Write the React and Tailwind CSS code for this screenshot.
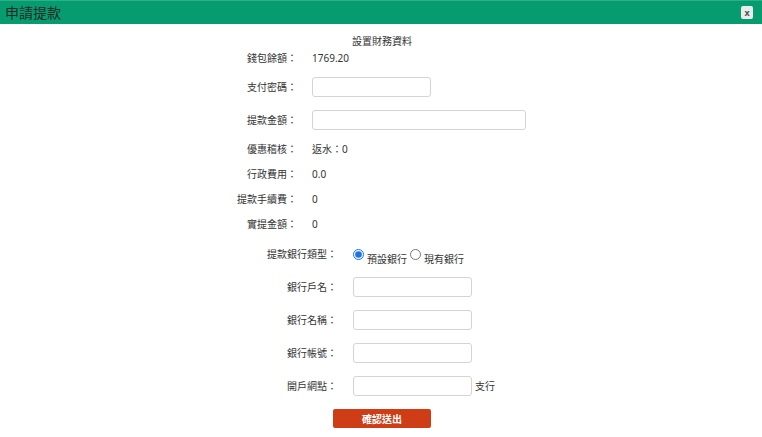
import React from 'react';

const font = "font-['Noto_Sans','Noto_Sans_CJK_TC',sans-serif]";

const InfoRow = ({ label, value, className = '' }) => (
    <div className={`flex items-center h-[16px] pl-[197px] ${className}`}>
        <div className="w-[100px] text-right shrink-0">{label}</div>
        <div className="ml-[15px]">{value}</div>
    </div>
);

const InputRow = ({ label, width = 'w-[119px]', className = '' }) => (
    <div className={`flex items-center h-[20px] pl-[197px] ${className}`}>
        <div className="w-[100px] text-right shrink-0">{label}</div>
        <input type="text" className={`ml-[15px] h-[20px] ${width} border border-[#d4d4d4] rounded-[3px] bg-white outline-none`} />
    </div>
);

const BankRow = ({ label, suffix, className = '' }) => (
    <div className={`flex items-center h-[20px] pl-[197px] ${className}`}>
        <div className="w-[140px] text-right shrink-0">{label}</div>
        <input type="text" className="ml-[16px] h-[20px] w-[119px] border border-[#d4d4d4] rounded-[3px] bg-white outline-none" />
        {suffix && <span className="ml-[3px]">{suffix}</span>}
    </div>
);

export default function App() {
    return (
        <div className={`w-[762px] h-[437px] bg-white text-[10px] text-[#333] ${font}`}>
            {/* header */}
            <div className="h-[24px] bg-[#079b70] border-t border-[#2bb089] flex items-center justify-between pl-[5px] pr-[9px]">
                <span className="text-[14px] text-[#1d2b25] leading-none">申請提款</span>
                <button className="w-[12px] h-[13px] bg-[#e9ecea] rounded-[2px] flex items-center justify-center text-[9px] font-bold text-[#555] leading-none">
                    x
                </button>
            </div>

            <div className="flex flex-col">
                <div className="mt-[8px] h-[18px] flex items-center pl-[352px]">設置財務資料</div>

                <InfoRow label="錢包餘額：" value="1769.20" />
                <InputRow label="支付密碼：" className="mt-[11px]" />
                <InputRow label="提款金額：" width="w-[214px]" className="mt-[13px]" />
                <InfoRow label="優惠稽核：" value="返水：0" className="mt-[11px]" />
                <InfoRow label="行政費用：" value="0.0" className="mt-[9px]" />
                <InfoRow label="提款手續費：" value="0" className="mt-[9px]" />
                <InfoRow label="實提金額：" value="0" className="mt-[9px]" />

                <div className="mt-[14px] h-[16px] flex items-center pl-[197px]">
                    <div className="w-[140px] text-right shrink-0">提款銀行類型：</div>
                    <label className="ml-[16px] flex items-center">
                        <input type="radio" name="bankType" defaultChecked className="m-0 w-[11px] h-[11px] accent-[#1a73e8]" />
                        <span className="ml-[3px] pt-[11px]">預設銀行</span>
                    </label>
                    <label className="ml-[3px] flex items-center">
                        <input type="radio" name="bankType" className="m-0 w-[11px] h-[11px] accent-[#1a73e8]" />
                        <span className="ml-[3px] pt-[11px]">現有銀行</span>
                    </label>
                </div>

                <BankRow label="銀行戶名：" className="mt-[15px]" />
                <BankRow label="銀行名稱：" className="mt-[13px]" />
                <BankRow label="銀行帳號：" className="mt-[13px]" />
                <BankRow label="開戶網點：" suffix="支行" className="mt-[13px]" />

                <div className="mt-[13px] pl-[333px]">
                    <button className="w-[98px] h-[19px] bg-[#cf3d17] rounded-[2px] text-white font-bold text-[10px] leading-none">
                        確認送出
                    </button>
                </div>
            </div>
        </div>
    );
}
